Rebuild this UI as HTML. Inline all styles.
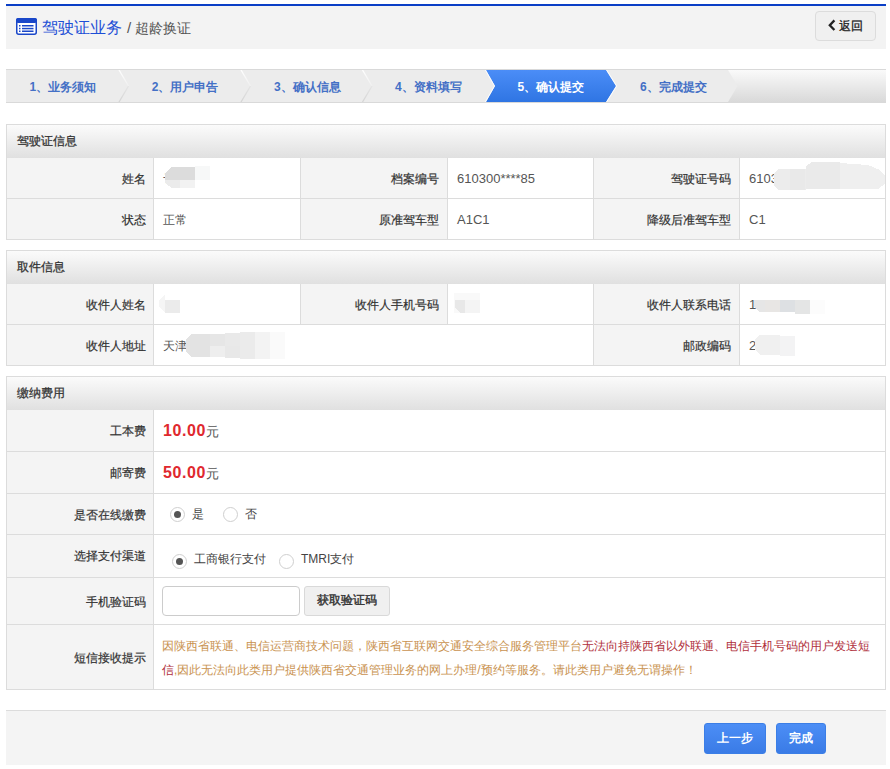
<!DOCTYPE html>
<html><head><meta charset="utf-8">
<style>
*{margin:0;padding:0;box-sizing:border-box}
html,body{width:890px;height:769px;overflow:hidden;background:#fff}
body{position:relative;font-family:"Liberation Sans",sans-serif;font-size:12px;color:#333}
.abs{position:absolute}
/* header */
.hd{position:absolute;left:6px;top:4px;width:880px;height:45px;border-top:2px solid #0a3ec6;background:#f3f3f3}
.hd .ico{position:absolute;left:10px;top:12px;width:21px;height:17px}
.hd .t1{position:absolute;left:36px;top:12px;font-size:16px;color:#1d4fd6;line-height:20px;white-space:nowrap}
.hd .t2{position:absolute;left:121px;top:13px;font-size:14px;color:#555;line-height:18px;white-space:nowrap}
.back{position:absolute;left:809px;top:5px;width:61px;height:30px;border:1px solid #dcdcdc;border-radius:4px;background:#f0f0f0;font-weight:bold;font-size:12px;color:#222;line-height:28px;white-space:nowrap}
/* steps */
.steps{position:absolute;left:6px;top:69px;width:880px;height:34px;border-top:1px solid #d9d9d9;border-bottom:1px solid #d9d9d9;background:#ececec;overflow:hidden}
.st{position:absolute;top:1px;height:32px;line-height:32px;font-weight:bold;color:#4470c6;font-size:12px;white-space:nowrap;text-align:center}
/* tables */
.tb{position:absolute;left:6px;width:880px;border:1px solid #dcdcdc;background:#fff}
.th{height:33px;background:linear-gradient(#fbfbfb,#e0e0e0);line-height:32px;padding-left:10px;color:#333;-webkit-text-stroke:0.25px #333}
.tr{position:relative;border-top:1px solid #dcdcdc}
.lb{position:absolute;top:0;bottom:0;background:#f4f4f4;text-align:right;padding-right:8px;color:#333;-webkit-text-stroke:0.2px #333;white-space:nowrap;padding-top:1px}
.vl{position:absolute;top:0;bottom:0;padding-left:9px;color:#555;white-space:nowrap;padding-top:1px;font-size:13px}
.bl{border-left:1px solid #dcdcdc}
.blur{position:absolute;background:#e3e3e3;filter:blur(3px);border-radius:6px}

.fee{font-size:16px;font-weight:bold;color:#e0282e;letter-spacing:0.6px;font-family:"Liberation Sans",sans-serif}
.yuan{font-size:13px;color:#555}
.radio{position:absolute;width:15px;height:15px;border:1px solid #cfcfcf;border-radius:50%;background:#fff}
.radio.on::after{content:"";position:absolute;left:3px;top:3px;width:7px;height:7px;border-radius:50%;background:#555}
.rt{position:absolute;font-size:12px;line-height:16px;color:#444}
.inp{position:absolute;left:8px;top:8px;width:138px;height:30px;border:1px solid #ccc;border-radius:4px;background:#fff}
.btn{position:absolute;left:150px;top:8px;width:86px;height:30px;border:1px solid #d9d9d9;border-radius:3px;background:#f0f0f0;color:#333;line-height:27px;text-align:center;-webkit-text-stroke:0.4px #333;font-size:12px}
.notice{color:#c9924f;font-size:12px;line-height:24px;padding:9px 8px 0 8px;white-space:normal}
.notice .red{color:#b0303c}
.ft{position:absolute;left:6px;top:710px;width:880px;height:55px;border-top:1px solid #dcdcdc;background:#f4f4f4}
.pbtn{position:absolute;top:12px;height:31px;border:1px solid #3b7ee6;border-radius:3px;background:linear-gradient(#4c8ef6,#3a7be6);color:#fff;font-weight:bold;text-align:center;line-height:29px;font-size:12px}
</style></head>
<body>
<div class="hd">
  <svg class="ico" viewBox="0 0 21 17"><rect x="0.75" y="0.75" width="19.5" height="15.5" rx="2" fill="#fff" stroke="#1a47c9" stroke-width="1.5"/><rect x="0" y="0" width="21" height="5" rx="2" fill="#1a47c9"/><rect x="3" y="7" width="1.5" height="1.5" fill="#1a47c9"/><rect x="3" y="9.8" width="1.5" height="1.5" fill="#1a47c9"/><rect x="3" y="12.5" width="1.5" height="1.5" fill="#1a47c9"/><rect x="6" y="7" width="11.5" height="1.5" fill="#1a47c9"/><rect x="6" y="9.8" width="11.5" height="1.5" fill="#1a47c9"/><rect x="6" y="12.5" width="11.5" height="1.5" fill="#1a47c9"/></svg>
  <div class="t1">驾驶证业务</div>
  <div class="t2"><span style="font-size:15px">/</span> 超龄换证</div>
  <div class="back"><svg style="position:absolute;left:11px;top:6px" width="10" height="14" viewBox="0 0 10 14"><path d="M7.4 2.4 L2.8 7.2 L7.4 12" stroke="#222" stroke-width="2.3" fill="none"/></svg><span style="position:absolute;left:23px;top:0px;font-weight:normal;-webkit-text-stroke:0.3px #222">返回</span></div>
</div>

<div class="steps" id="steps"><svg class="abs" style="left:0;top:0" width="880" height="32" viewBox="0 0 880 32"><defs><linearGradient id="sw" gradientUnits="userSpaceOnUse" x1="0" y1="0" x2="0" y2="16"><stop offset="0" stop-color="#fff"/><stop offset="1" stop-color="#fff" stop-opacity="0.2"/></linearGradient><linearGradient id="sg" gradientUnits="userSpaceOnUse" x1="0" y1="16" x2="0" y2="32"><stop offset="0" stop-color="#d4d4d4" stop-opacity="0.3"/><stop offset="1" stop-color="#d4d4d4"/></linearGradient><linearGradient id="gb" x1="0" y1="0" x2="0" y2="1"><stop offset="0" stop-color="#4b8df7"/><stop offset="1" stop-color="#2f75e3"/></linearGradient><linearGradient id="gg" x1="0" y1="0" x2="0" y2="1"><stop offset="0" stop-color="#fafafa"/><stop offset="1" stop-color="#d9d9d9"/></linearGradient></defs><path d="M113 0 L122.5 16" stroke="url(#sw)" stroke-width="1.3" fill="none"/><path d="M122.5 16 L113 32" stroke="url(#sg)" stroke-width="1.3" fill="none"/><path d="M235 0 L244.5 16" stroke="url(#sw)" stroke-width="1.3" fill="none"/><path d="M244.5 16 L235 32" stroke="url(#sg)" stroke-width="1.3" fill="none"/><path d="M356.5 0 L366.0 16" stroke="url(#sw)" stroke-width="1.3" fill="none"/><path d="M366.0 16 L356.5 32" stroke="url(#sg)" stroke-width="1.3" fill="none"/><path d="M722 0 L880 0 L880 32 L722 32 L731.5 16 Z" fill="url(#gg)"/><path d="M480 0 L600 0 L610 16 L600 32 L480 32 L489 16 Z" fill="url(#gb)"/><path d="M479.4 0 L488.5 16 L479.4 32" stroke="#fff" stroke-width="1" fill="none" opacity="0.9"/><path d="M600.6 0 L610.6 16 L600.6 32" stroke="#fff" stroke-width="1" fill="none" opacity="0.9"/></svg><div class="st" style="left:23.5px">1、业务须知</div><div class="st" style="left:145.7px">2、用户申告</div><div class="st" style="left:268.0px">3、确认信息</div><div class="st" style="left:389.0px">4、资料填写</div><div class="st" style="left:511.5px;color:#fff">5、确认提交</div><div class="st" style="left:634.0px">6、完成提交</div></div>


<div class="tb" style="top:124px;height:116px">
  <div class="th">驾驶证信息</div>
  <div class="tr" style="height:40px;border-top:0">
    <div class="lb" style="left:0;width:147px;line-height:40px">姓名</div>
    <div class="vl bl" style="left:146px;width:147px;line-height:40px"><span style="font-size:12px">讠</span></div>
    <div class="lb bl" style="left:293px;width:147px;line-height:40px">档案编号</div>
    <div class="vl bl" style="left:440px;width:146px;line-height:40px">610300****85</div>
    <div class="lb bl" style="left:586px;width:146px;line-height:40px">驾驶证号码</div>
    <div class="vl bl" style="left:732px;width:147px;line-height:40px">6103</div>
  </div>
  <div class="tr" style="height:41px">
    <div class="lb" style="left:0;width:147px;line-height:40px">状态</div>
    <div class="vl bl" style="left:146px;width:147px;line-height:40px"><span style="font-size:12px">正常</span></div>
    <div class="lb bl" style="left:293px;width:147px;line-height:40px">原准驾车型</div>
    <div class="vl bl" style="left:440px;width:146px;line-height:40px">A1C1</div>
    <div class="lb bl" style="left:586px;width:146px;line-height:40px">降级后准驾车型</div>
    <div class="vl bl" style="left:732px;width:147px;line-height:40px">C1</div>
  </div>
</div>

<div class="tb" style="top:250px;height:116px">
  <div class="th">取件信息</div>
  <div class="tr" style="height:40px;border-top:0">
    <div class="lb" style="left:0;width:147px;line-height:40px">收件人姓名</div>
    <div class="vl bl" style="left:146px;width:147px;line-height:40px"></div>
    <div class="lb bl" style="left:293px;width:147px;line-height:40px">收件人手机号码</div>
    <div class="vl bl" style="left:440px;width:146px;line-height:40px"></div>
    <div class="lb bl" style="left:586px;width:146px;line-height:40px">收件人联系电话</div>
    <div class="vl bl" style="left:732px;width:147px;line-height:40px">1</div>
  </div>
  <div class="tr" style="height:41px">
    <div class="lb" style="left:0;width:147px;line-height:40px">收件人地址</div>
    <div class="vl bl" style="left:146px;width:440px;line-height:40px"><span style="font-size:12px">天津</span></div>
    <div class="lb bl" style="left:586px;width:146px;line-height:40px">邮政编码</div>
    <div class="vl bl" style="left:732px;width:147px;line-height:40px">2</div>
  </div>
</div>

<div class="tb" style="top:376px;height:314px">
  <div class="th">缴纳费用</div>
  <div class="tr" style="height:41px;border-top:0">
    <div class="lb" style="left:0;width:147px;line-height:40px">工本费</div>
    <div class="vl bl" style="left:146px;width:733px;line-height:40px"><span class="fee">10.00</span><span class="yuan">元</span></div>
  </div>
  <div class="tr" style="height:42px">
    <div class="lb" style="left:0;width:147px;line-height:40px">邮寄费</div>
    <div class="vl bl" style="left:146px;width:733px;line-height:40px"><span class="fee">50.00</span><span class="yuan">元</span></div>
  </div>
  <div class="tr" style="height:41px">
    <div class="lb" style="left:0;width:147px;line-height:40px">是否在线缴费</div>
    <div class="vl bl" style="left:146px;width:733px;">
      <span class="radio on" style="left:16px;top:13px"></span><span class="rt" style="left:38px;top:12px">是</span>
      <span class="radio" style="left:69px;top:13px"></span><span class="rt" style="left:91px;top:12px">否</span>
    </div>
  </div>
  <div class="tr" style="height:43px">
    <div class="lb" style="left:0;width:147px;line-height:40px">选择支付渠道</div>
    <div class="vl bl" style="left:146px;width:733px;">
      <span class="radio on" style="left:18px;top:19px"></span><span class="rt" style="left:40px;top:16px">工商银行支付</span>
      <span class="radio" style="left:125px;top:19px"></span><span class="rt" style="left:147px;top:16px">TMRI支付</span>
    </div>
  </div>
  <div class="tr" style="height:47px">
    <div class="lb" style="left:0;width:147px;line-height:46px">手机验证码</div>
    <div class="vl bl" style="left:146px;width:733px;">
      <span class="inp"></span><span class="btn">获取验证码</span>
    </div>
  </div>
  <div class="tr" style="height:65px">
    <div class="lb" style="left:0;width:147px;line-height:64px">短信接收提示</div>
    <div class="vl bl notice" style="left:146px;width:733px;">因陕西省联通、电信运营商技术问题，陕西省互联网交通安全综合服务管理平台<span class="red">无法向持陕西省以外联通、电信手机号码的用户发送短信</span>,因此无法向此类用户提供陕西省交通管理业务的网上办理/预约等服务。请此类用户避免无谓操作！</div>
  </div>
</div>

<div class="ft">
  <span class="pbtn" style="left:698px;width:62px">上一步</span>
  <span class="pbtn" style="left:770px;width:50px">完成</span>
</div>
<svg style="position:absolute;left:0;top:0" width="890" height="769" viewBox="0 0 890 769">
<g shape-rendering="crispEdges">
<!-- A name -->
<polygon points="165,173 171,167 195,167 195,180 165,180" fill="#dcdcdc"/>
<rect x="195" y="166" width="15" height="14" fill="#f7f8f8"/>
<polygon points="165,180 180,180 180,188 172,188 165,183" fill="#ebebeb"/>
<rect x="180" y="180" width="15" height="8" fill="#f2f2f2"/>
<!-- G license -->
<polygon points="774,173 779,169 806,169 806,190 779,190 774,186" fill="#ececec"/>
<polygon points="806,166 812,162 840,162 840,189 806,189" fill="#eaeaea"/>
<polygon points="840,163 868,165 880,170 885,176 885,184 878,189 840,189" fill="#efefef"/>
<rect x="790" y="169" width="15" height="21" fill="#e9e9e9"/>
<!-- B -->
<polygon points="159,300 165,294 165,313 159,307" fill="#f5f5f5"/>
<rect x="165" y="300" width="15" height="13" fill="#ebebeb"/>
<!-- C -->
<rect x="454" y="293" width="26" height="20" fill="#f9f9f9"/>
<polygon points="455,300 465,300 465,313 460,313 455,307" fill="#e8e8e8"/>
<rect x="465" y="300" width="15" height="13" fill="#f4f4f4"/>
<!-- D phone -->
<polygon points="754,300 765,300 765,312 760,312 754,307" fill="#e6e6e6"/>
<rect x="765" y="300" width="15" height="12" fill="#e8e6e4"/>
<rect x="780" y="300" width="15" height="12" fill="#dde0e3"/>
<rect x="795" y="300" width="15" height="14" fill="#e4e5e5"/>
<rect x="810" y="300" width="15" height="14" fill="#fcfcfc"/>
<!-- E address -->
<polygon points="186,340 191,334 210,334 210,357 191,357 186,352" fill="#e3e3e3"/>
<rect x="210" y="334" width="15" height="12" fill="#e6e6e6"/>
<rect x="210" y="346" width="15" height="11" fill="#eeeeee"/>
<rect x="225" y="333" width="15" height="13" fill="#e9e9e9"/>
<rect x="225" y="346" width="15" height="12" fill="#e8e8e8"/>
<rect x="240" y="332" width="15" height="27" fill="#ebebeb"/>
<rect x="255" y="332" width="15" height="27" fill="#f3f3f3"/>
<rect x="270" y="332" width="15" height="27" fill="#fafafa"/>
<!-- F postcode -->
<polygon points="755,339 760,335 780,335 780,355 760,355 755,350" fill="#f0f0f0"/>
<rect x="780" y="336" width="15" height="20" fill="#f3f3f4"/>
</g>
</svg>
</body></html>
